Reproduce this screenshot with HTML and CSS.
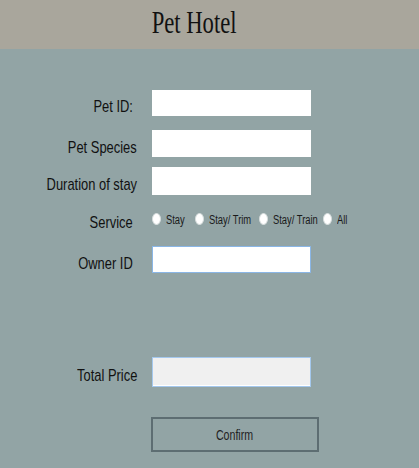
FILE: index.html
```html
<!DOCTYPE html>
<html>
<head>
<meta charset="utf-8">
<link rel="stylesheet" href="styles.css">
</head>
<body>
<header class="header"><span class="title">Pet Hotel</span></header>
<main class="form">
  <div class="row r1"><label class="lbl inset"><span class="txt">Pet ID:</span></label><input class="field" type="text"></div>
  <div class="row r2"><label class="lbl"><span class="txt">Pet Species</span></label><input class="field" type="text"></div>
  <div class="row r3"><label class="lbl"><span class="txt">Duration of stay</span></label><input class="field" type="text"></div>
  <div class="row r4"><label class="lbl inset"><span class="txt">Service</span></label>
    <div class="radios">
      <label class="opt"><input type="radio" name="svc" class="radio"><span class="otxt">Stay</span></label>
      <label class="opt"><input type="radio" name="svc" class="radio"><span class="otxt">Stay/ Trim</span></label>
      <label class="opt"><input type="radio" name="svc" class="radio"><span class="otxt">Stay/ Train</span></label>
      <label class="opt"><input type="radio" name="svc" class="radio"><span class="otxt">All</span></label>
    </div>
  </div>
  <div class="row r5"><label class="lbl inset"><span class="txt">Owner ID</span></label><input class="field focus" type="text"></div>
  <div class="row r6"><label class="lbl"><span class="txt">Total Price</span></label><input class="field readonly" type="text" readonly></div>
  <div class="row r7"><span class="lbl"></span><button class="btn" type="button"><span class="btxt">Confirm</span></button></div>
</main>
</body>
</html>
```
FILE: styles.css
```css
html, body {
  margin: 0;
  padding: 0;
}
body {
  width: 419px;
  height: 468px;
  background: #92a4a5;
  font-family: "Liberation Sans", Arial, sans-serif;
  color: #111;
  overflow: hidden;
}
.header {
  height: 49px;
  background: #a9a69c;
  display: flex;
  justify-content: center;
  padding-right: 30px;
  padding-top: 7px;
  box-sizing: border-box;
}
.title {
  display: inline-block;
  font-family: "Liberation Serif", "Times New Roman", serif;
  font-size: 31px;
  line-height: 31px;
  color: #111;
  transform: scaleX(0.73);
}
.form {
  display: flex;
  flex-direction: column;
  padding-top: 41px;
}
.row {
  display: flex;
  align-items: center;
  gap: 15px;
}
.lbl {
  width: 137px;
  flex: none;
  box-sizing: border-box;
  text-align: right;
  font-size: 17px;
  line-height: 19px;
  padding-top: 7px;
  white-space: nowrap;
}
.lbl.inset {
  padding-right: 4px;
}
.txt {
  display: inline-block;
  transform: scaleX(0.76);
  transform-origin: right center;
}
.field {
  width: 159px;
  height: 100%;
  box-sizing: border-box;
  border: none;
  background: #fff;
  margin: 0;
  padding: 0 3px;
  outline: none;
}
.field.focus {
  border: 1px solid #8ab6e6;
}
.field.readonly {
  background: #f0f0f0;
  border: 1px solid #a4c8ee;
  box-shadow: inset 0 -1px 0 #fff;
}
.r1 { height: 26px; }
.r2 { height: 27px; margin-top: 14px; }
.r3 { height: 28px; margin-top: 10px; }
.r4 { height: 24px; margin-top: 12px; }
.r5 { height: 27px; margin-top: 15px; }
.r6 { height: 30px; margin-top: 84px; }
.r7 { height: 35px; margin-top: 30px; gap: 14px; }
.radios {
  display: grid;
  grid-template-columns: 43px 64px 64px auto;
  align-items: center;
  height: 100%;
}
.opt {
  display: flex;
  align-items: center;
  gap: 5px;
  font-size: 12px;
  line-height: 14px;
  color: #1a1a1a;
  white-space: nowrap;
}
.otxt {
  display: inline-block;
  padding-top: 2px;
  transform: scaleX(0.78);
  transform-origin: left center;
}
.radio {
  appearance: none;
  -webkit-appearance: none;
  margin: 0;
  flex: none;
  width: 9px;
  height: 12px;
  border-radius: 50%;
  background: #fff;
  border: 1px solid #d6dcdc;
  box-sizing: border-box;
}
.btn {
  width: 168px;
  height: 35px;
  box-sizing: border-box;
  background: transparent;
  border: 2px solid #5d6d72;
  font-family: "Liberation Sans", Arial, sans-serif;
  font-size: 14px;
  color: #222;
  padding: 0;
}
.btxt {
  display: inline-block;
  transform: scaleX(0.76);
}
```
